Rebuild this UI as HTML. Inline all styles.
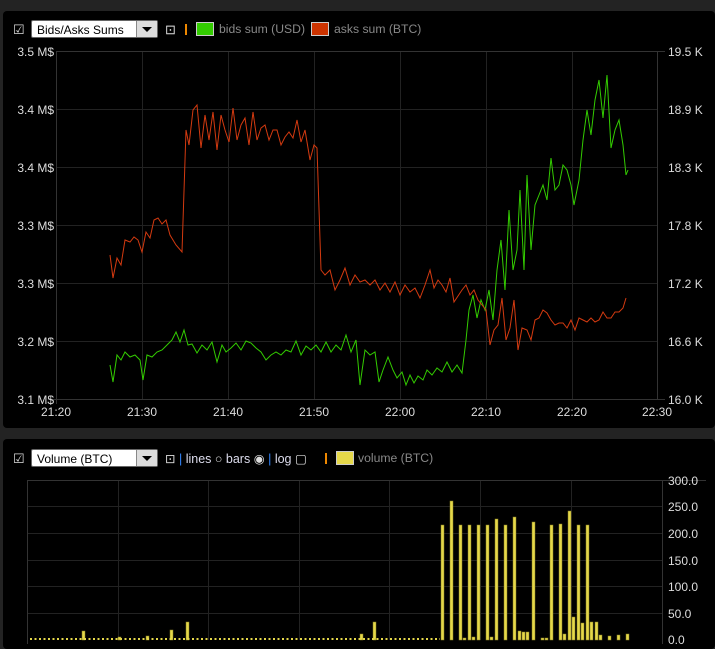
<!DOCTYPE html><html><head><style>
body{margin:0;width:715px;height:644px;background:#232323;overflow:hidden;font-family:"Liberation Sans",sans-serif;position:relative}
.p{position:absolute;left:3px;right:0;background:#000;border-radius:4px}
svg{position:absolute;left:0;top:0}
text{font-family:"Liberation Sans",sans-serif;font-size:12px;fill:#ddd}
.sel{position:absolute;height:18px;border:1px solid #666;border-radius:2px;background:#fff;font-size:12px;color:#000;line-height:18px;padding-left:5px;box-sizing:border-box}
.sel b{position:absolute;right:0;top:0;width:20px;height:16px;background:#ddd;border-left:1px solid #888}
.sel b:after{content:"";position:absolute;left:5px;top:6px;border:5px solid transparent;border-top:5px solid #000;border-bottom:0}
.t{position:absolute;font-size:13px;color:#888;white-space:nowrap;line-height:16px}
.g{font-size:12.2px}
.sw{position:absolute;width:16px;height:12px;border:1px solid #ccc;top:1px}
.w{color:#ddd}
.l{color:#dde}
.bar{position:absolute;width:2px;height:11px;background:#e80}
</style></head><body>
<div class="p" style="top:11px;height:417px"></div>
<div class="p" style="top:439px;height:210px"></div>
<div class="t w" style="left:13px;top:22px">☑</div>
<div class="sel" style="left:31px;top:20px;width:127px">Bids/Asks Sums<b></b></div>
<div class="t w" style="left:165px;top:22px">⊡</div>
<div class="bar" style="left:185px;top:24px"></div>
<div class="t g" style="left:196px;top:21px;height:16px"><span class="sw" style="background:#3c0;left:0"></span><span style="position:absolute;left:23px">bids sum (USD)</span><span class="sw" style="background:#c30;left:115px"></span><span style="position:absolute;left:138px">asks sum (BTC)</span></div>
<div class="t w" style="left:13px;top:451px">☑</div>
<div class="sel" style="left:31px;top:449px;width:127px">Volume (BTC)<b></b></div>
<div class="t w" style="left:165px;top:451px;font-size:12.5px">⊡ <span style="color:#38f">|</span> <span class="l">lines</span> ○ <span class="l">bars</span> ◉ <span style="color:#38f">|</span> <span class="l">log</span> ▢</div>
<div class="bar" style="left:325px;top:453px"></div>
<div class="t g" style="left:336px;top:450px;height:16px"><span class="sw" style="background:#e5d84a;left:0"></span><span style="position:absolute;left:22px">volume (BTC)</span></div>
<svg width="715" height="644">
<g stroke="#222" stroke-width="1">
<path d="M142.5 51V399M228.5 51V399M314.5 51V399M400.5 51V399M486.5 51V399M572.5 51V399M56 109.5H657M56 167.5H657M56 225.5H657M56 283.5H657M56 341.5H657"/>
<path d="M118.5 480V640M208.5 480V640M299.5 480V640M389.5 480V640M480.5 480V640M571.5 480V640M27 506.5H662M27 533.5H662M27 560.5H662M27 586.5H662M27 613.5H662"/>
</g>
<g stroke="#333"><path d="M56.5 51V404M56 51.5H665M657.5 51V399M56 399.5H665M48 399.5H56M27.5 480V644M27 480.5H706M662.5 480V644"/></g>
<g text-anchor="end"><text x="54" y="56">3.5 M$</text><text x="54" y="114">3.4 M$</text><text x="54" y="172">3.4 M$</text><text x="54" y="230">3.3 M$</text><text x="54" y="288">3.3 M$</text><text x="54" y="346">3.2 M$</text><text x="54" y="404">3.1 M$</text></g>
<g><text x="668" y="56">19.5 K</text><text x="668" y="114">18.9 K</text><text x="668" y="172">18.3 K</text><text x="668" y="230">17.8 K</text><text x="668" y="288">17.2 K</text><text x="668" y="346">16.6 K</text><text x="668" y="404">16.0 K</text>
<text x="668" y="485">300.0</text><text x="668" y="511">250.0</text><text x="668" y="538">200.0</text><text x="668" y="565">150.0</text><text x="668" y="591">100.0</text><text x="668" y="618">50.0</text><text x="668" y="644">0.0</text></g>
<g text-anchor="middle"><text x="56" y="416">21:20</text><text x="142" y="416">21:30</text><text x="228" y="416">21:40</text><text x="314" y="416">21:50</text><text x="400" y="416">22:00</text><text x="486" y="416">22:10</text><text x="572" y="416">22:20</text><text x="657" y="416">22:30</text></g>
<polyline fill="none" stroke="#3c0" stroke-width="1" points="110,365 113,382 117,355 121,360 125,352 130,357 135,355 140,360 143,380 147,355 152,357 157,352 162,350 168,344 172,340 176,332 180,342 184,330 188,345 192,344 197,353 202,345 207,350 212,342 217,362 222,345 226,352 231,348 236,343 241,350 246,341 251,343 256,348 261,352 266,360 271,355 276,352 281,355 286,350 291,352 296,341 301,355 306,346 311,350 316,345 321,352 326,342 331,352 336,345 341,350 346,335 351,352 356,340 360,385 365,350 370,355 375,352 379,382 383,370 388,357 393,370 397,378 402,372 406,385 410,375 414,383 418,376 423,380 427,370 432,375 437,368 442,372 447,362 452,372 457,365 462,373 466,340 469,310 473,295 477,318 481,300 485,310 489,290 493,320 497,270 501,240 505,290 509,210 513,270 517,250 520,190 524,270 527,175 531,250 535,205 539,195 543,185 547,200 551,158 555,190 559,185 563,165 567,170 571,185 574,205 579,180 583,140 587,110 591,135 595,100 599,80 603,118 607,75 611,148 615,130 619,120 623,145 626,175 628,170"/>
<polyline fill="none" stroke="#d43a10" stroke-width="1" points="110,255 113,278 117,258 121,265 125,240 130,242 134,237 138,240 142,252 146,232 150,238 154,220 158,218 162,224 166,220 170,235 176,245 182,252 186,130 189,145 193,110 197,105 201,148 205,115 209,140 213,112 217,150 221,115 225,130 229,142 233,108 237,140 241,125 245,118 249,145 253,112 257,140 261,128 265,125 269,140 273,130 277,130 281,145 285,137 289,132 293,138 297,120 301,142 305,130 310,160 314,145 317,148 321,270 325,275 330,270 335,290 340,280 345,268 350,285 355,275 360,282 365,280 370,285 375,280 380,290 385,283 390,292 395,282 400,295 405,285 410,292 415,288 420,298 425,285 430,270 434,288 438,280 442,285 446,292 450,278 454,302 458,296 462,290 466,285 470,295 474,290 478,300 482,305 486,310 490,345 494,330 498,325 502,298 506,340 510,328 514,300 518,350 522,328 527,330 531,340 535,320 539,318 543,310 547,313 551,320 555,325 559,323 563,323 567,328 571,320 575,330 579,318 583,320 587,322 591,318 595,322 599,320 603,312 607,318 611,318 615,312 619,312 623,308 626,298"/>
<g fill="#e5d84a" stroke="#8a7f20" stroke-width="0.5">
<rect x="441" y="525" width="3" height="115"/><rect x="450" y="501" width="3" height="139"/><rect x="459" y="525" width="3" height="115"/><rect x="468" y="525" width="3" height="115"/><rect x="477" y="525" width="3" height="115"/><rect x="486" y="525" width="3" height="115"/><rect x="495" y="519" width="3" height="121"/><rect x="504" y="525" width="3" height="115"/><rect x="513" y="517" width="3" height="123"/><rect x="532" y="522" width="3" height="118"/><rect x="550" y="525" width="3" height="115"/><rect x="559" y="524" width="3" height="116"/><rect x="568" y="511" width="3" height="129"/><rect x="577" y="525" width="3" height="115"/><rect x="586" y="525" width="3" height="115"/>
<rect x="82" y="631" width="3" height="9"/><rect x="170" y="630" width="3" height="10"/><rect x="186" y="622" width="3" height="18"/><rect x="373" y="622" width="3" height="18"/><rect x="360" y="634" width="3" height="6"/><rect x="146" y="636" width="3" height="4"/><rect x="118" y="637" width="3" height="3"/>
<rect x="518" y="631" width="3" height="9"/><rect x="522" y="632" width="3" height="8"/><rect x="526" y="632" width="3" height="8"/><rect x="563" y="634" width="3" height="6"/><rect x="572" y="617" width="3" height="23"/><rect x="581" y="623" width="3" height="17"/><rect x="590" y="622" width="3" height="18"/><rect x="595" y="622" width="3" height="18"/><rect x="599" y="635" width="3" height="5"/><rect x="608" y="636" width="3" height="4"/><rect x="617" y="635" width="3" height="5"/><rect x="626" y="634" width="3" height="6"/><rect x="545" y="638" width="3" height="2"/><rect x="541" y="638" width="3" height="2"/><rect x="463" y="638" width="3" height="2"/><rect x="472" y="637" width="3" height="3"/><rect x="490" y="637" width="3" height="3"/>
</g>
<path d="M30 639H440" stroke="#e5d84a" stroke-width="2" stroke-dasharray="2 2.5"/>
</svg>
</body></html>
